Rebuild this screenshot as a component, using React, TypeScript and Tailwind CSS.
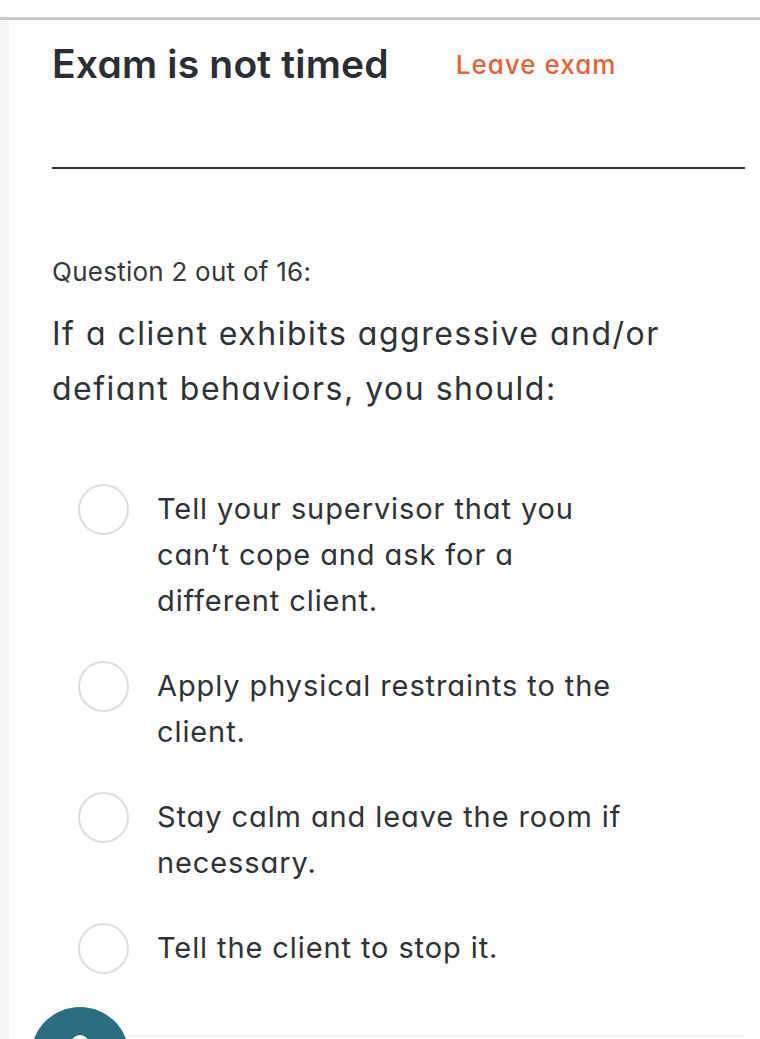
import { useState } from 'react';

const OPTIONS = [
  'Tell your supervisor that you can’t cope and ask for a different client.',
  'Apply physical restraints to the client.',
  'Stay calm and leave the room if necessary.',
  'Tell the client to stop it.',
];

const font = { fontFamily: 'Inter, "Noto Sans", sans-serif', fontFeatureSettings: '"cv11"' };

export default function App() {
  const [picked, setPicked] = useState<number | null>(null);

  return (
    <div className="min-h-screen bg-white text-[#2f3236]" style={font}>
      {/* top bar */}
      <div className="h-[17px] bg-white" />
      <div className="h-[3px] bg-[#c9c9c9] shadow-[0_2px_3px_rgba(0,0,0,0.12)]" />

      <div className="flex">
        <div className="w-[9px] shrink-0 bg-[#f6f6f6]" />
        <main className="flex-1 bg-white pl-[43px] pr-[15px]">
          <div className="flex items-center pt-[12px] h-[76px]">
            <h1 className="text-[39px] font-semibold tracking-[0.2px] text-[#2b2e33]">Exam is not timed</h1>
            <button className="ml-[67px] text-[26px] font-medium tracking-[1px] text-[#e4633c]">
              Leave exam
            </button>
          </div>

          <div className="mt-[71px] h-[2px] bg-[#333333]" />

          <p className="mt-[83px] text-[26px] leading-[40px] tracking-[0.25px] text-[#35383c]">Question 2 out of 16:</p>

          <h2 className="mt-[14px] text-[32px] leading-[55px] font-normal tracking-[1.5px] text-[#2f3236]">
            If a client exhibits aggressive and/or defiant behaviors, you should:
          </h2>

          <ul className="mt-[70px] flex flex-col gap-[39px] pl-[26px]">
            {OPTIONS.map((opt, i) => (
              <li key={i}>
                <button
                  className="flex items-start gap-[28px] text-left"
                  onClick={() => setPicked(i)}
                >
                  <span
                    className={`mt-[-2px] h-[51px] w-[51px] shrink-0 rounded-full border-2 ${
                      picked === i ? 'border-[#2c6e80] bg-[#2c6e80]' : 'border-[#dedede] bg-white'
                    }`}
                  />
                  <span className="w-[480px] text-[29px] leading-[46px] tracking-[0.9px] text-[#2f3236]">{opt}</span>
                </button>
              </li>
            ))}
          </ul>

          <div className="mt-[33px] flex items-end">
            <div className="relative ml-[-21px] h-[100px] w-[98px] shrink-0 rounded-full bg-[#2c6e80]">
              <span className="absolute left-1/2 top-[28px] h-[12px] w-[18px] -translate-x-1/2 rounded-t-full bg-white" />
            </div>
            <div className="mb-[70px] h-[2px] flex-1 bg-[#efefef]" />
          </div>
        </main>
      </div>
    </div>
  );
}
